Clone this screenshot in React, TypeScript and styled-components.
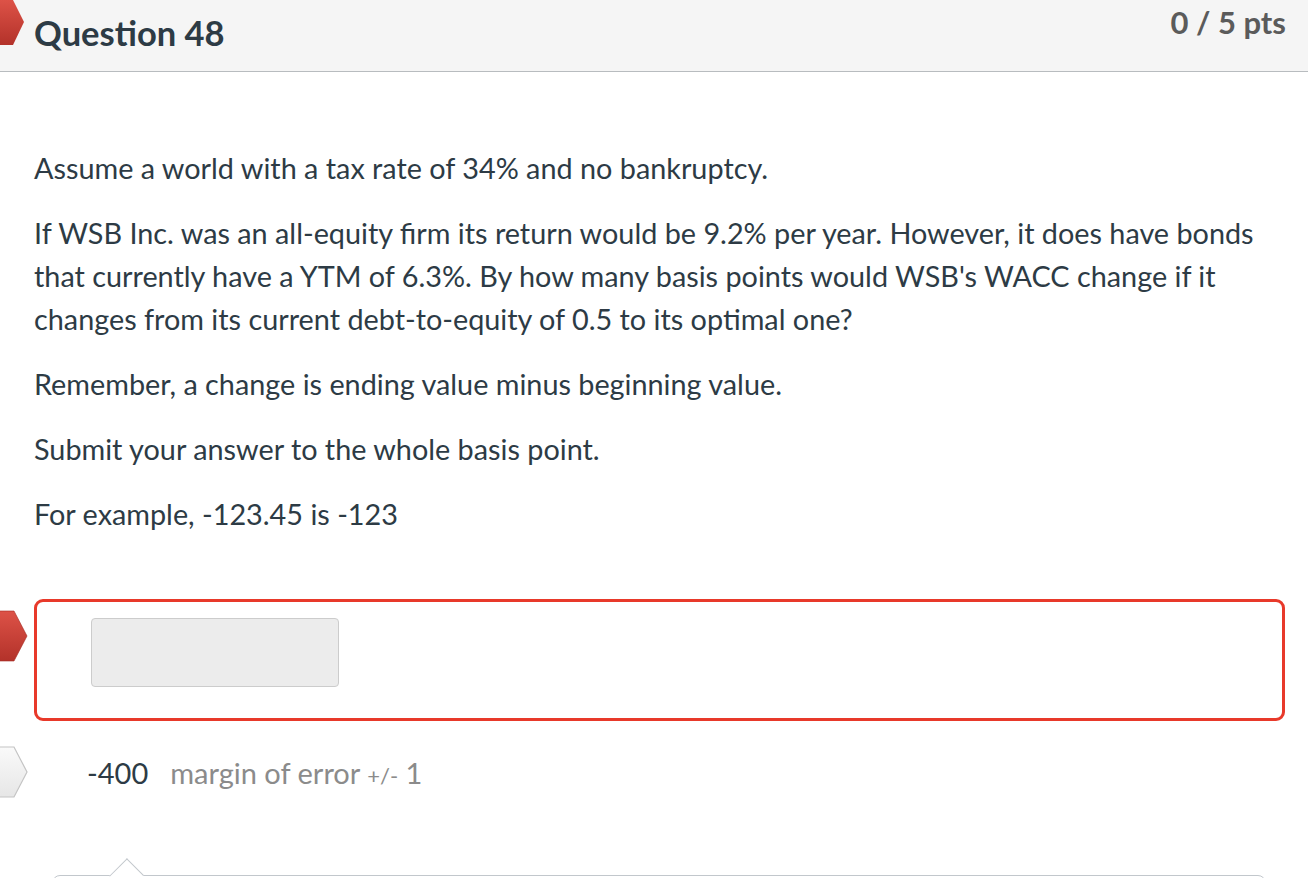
import React from 'react';
import styled, { createGlobalStyle } from 'styled-components';

const GlobalStyle = createGlobalStyle`
  html, body {
    margin: 0;
    padding: 0;
    background: #ffffff;
    overflow: hidden;
  }
  body {
    font-family: Lato, "Open Sans", "Liberation Sans", sans-serif;
    color: #2d3b45;
  }
`;

const paragraphs = [
  'Assume a world with a tax rate of 34% and no bankruptcy.',
  "If WSB Inc. was an all-equity firm its return would be 9.2% per year. However, it does have bonds that currently have a YTM of 6.3%. By how many basis points would WSB's WACC change if it changes from its current debt-to-equity of 0.5 to its optimal one?",
  'Remember, a change is ending value minus beginning value.',
  'Submit your answer to the whole basis point.',
  'For example, -123.45 is -123',
];

type MarkerProps = { tone: 'wrong' | 'correct' };

function Marker({ tone }: MarkerProps) {
  const id = `grad-${tone}`;
  const isWrong = tone === 'wrong';
  return (
    <svg width="30" height="52" viewBox="0 0 30 52">
      <defs>
        <linearGradient id={id} x1="0" y1="0" x2="0" y2="1">
          <stop offset="0" stopColor={isWrong ? '#dd5247' : '#fafafa'} />
          <stop offset="1" stopColor={isWrong ? '#b3322a' : '#e6e6e6'} />
        </linearGradient>
      </defs>
      <polygon
        points="-4,1 14,1 27,26 14,51 -4,51"
        fill={`url(#${id})`}
        stroke={isWrong ? '#a52a22' : '#c4c4c4'}
        strokeWidth={isWrong ? 0.6 : 1.2}
      />
    </svg>
  );
}

export default function App() {
  return (
    <Page>
      <GlobalStyle />
      <Header>
        <Title>Question 48</Title>
        <Points>0 / 5 pts</Points>
        <HeaderMarker>
          <svg width="28" height="46" viewBox="0 0 28 46">
            <defs>
              <linearGradient id="hdr" x1="0" y1="0" x2="0" y2="1">
                <stop offset="0" stopColor="#dd5247" />
                <stop offset="1" stopColor="#b3322a" />
              </linearGradient>
            </defs>
            <polygon points="-4,0 13,0 24,22 13,45 -4,45" fill="url(#hdr)" />
          </svg>
        </HeaderMarker>
      </Header>

      <Body>
        {paragraphs.map((p, i) => (
          <Paragraph key={i}>{p}</Paragraph>
        ))}
      </Body>

      <AnswerArea>
        <AnswerRow>
          <MarkerWrap $top={11}>
            <Marker tone="wrong" />
          </MarkerWrap>
          <AnswerBox>
            <AnswerInput type="text" aria-label="Your answer" readOnly />
          </AnswerBox>
        </AnswerRow>
        <CorrectRow>
          <MarkerWrap $top={-8}>
            <Marker tone="correct" />
          </MarkerWrap>
          <CorrectValue>-400</CorrectValue>
          <Margin>
            margin of error <Small>+/-</Small> 1
          </Margin>
        </CorrectRow>
      </AnswerArea>

      <Comments>
        <Caret />
      </Comments>
    </Page>
  );
}

const Page = styled.div`
  position: relative;
  width: 1308px;
  height: 878px;
  overflow: hidden;
  background: #ffffff;
`;

const Header = styled.div`
  position: relative;
  height: 72px;
  box-sizing: border-box;
  padding: 0 22px 0 34px;
  display: flex;
  justify-content: space-between;
  align-items: flex-start;
  background: #f5f5f5;
  border-bottom: 1px solid #b8bcbf;
`;

const HeaderMarker = styled.div`
  position: absolute;
  left: 0;
  top: 0;
  line-height: 0;
`;

const Title = styled.h2`
  margin: 12px 0 0;
  font-size: 34.5px;
  font-weight: 700;
  line-height: 42px;
  color: #2d3b45;
`;

const Points = styled.div`
  margin-top: 3px;
  font-size: 31px;
  font-weight: 700;
  line-height: 38px;
  color: #5b5b5b;
`;

const Body = styled.div`
  padding: 75px 34px 0;
`;

const Paragraph = styled.p`
  margin: 0 0 22px;
  font-size: 28.8px;
  line-height: 43px;
  color: #2d3b45;
  max-width: 1236px;
`;

const AnswerArea = styled.div`
  padding: 41px 23px 0 34px;
`;

const AnswerRow = styled.div`
  position: relative;
`;

const MarkerWrap = styled.div<{ $top: number }>`
  position: absolute;
  left: -34px;
  top: ${p => p.$top}px;
  line-height: 0;
`;

const AnswerBox = styled.div`
  height: 122px;
  box-sizing: border-box;
  padding: 16px 54px;
  border: 3px solid #e8392a;
  border-radius: 9px;
`;

const AnswerInput = styled.input`
  display: block;
  width: 248px;
  height: 69px;
  box-sizing: border-box;
  margin: 0;
  background: #ececec;
  border: 1px solid #cccccc;
  border-radius: 4px;
  outline: none;
`;

const CorrectRow = styled.div`
  position: relative;
  display: flex;
  align-items: baseline;
  gap: 22px;
  margin-top: 33px;
  padding-left: 53px;
  font-size: 29px;
  line-height: 38px;
`;

const CorrectValue = styled.span`
  color: #2d3b45;
`;

const Margin = styled.span`
  color: #8b8b8b;
`;

const Small = styled.span`
  font-size: 22px;
`;

const Comments = styled.div`
  position: absolute;
  left: 52px;
  right: 42px;
  top: 875px;
  height: 40px;
  border: 1px solid #c2c7cc;
  border-radius: 8px;
`;

const Caret = styled.div`
  position: absolute;
  left: 61px;
  top: -13px;
  width: 24px;
  height: 24px;
  background: #ffffff;
  border-left: 1px solid #c2c7cc;
  border-top: 1px solid #c2c7cc;
  transform: rotate(45deg) scaleX(0.95);
`;
